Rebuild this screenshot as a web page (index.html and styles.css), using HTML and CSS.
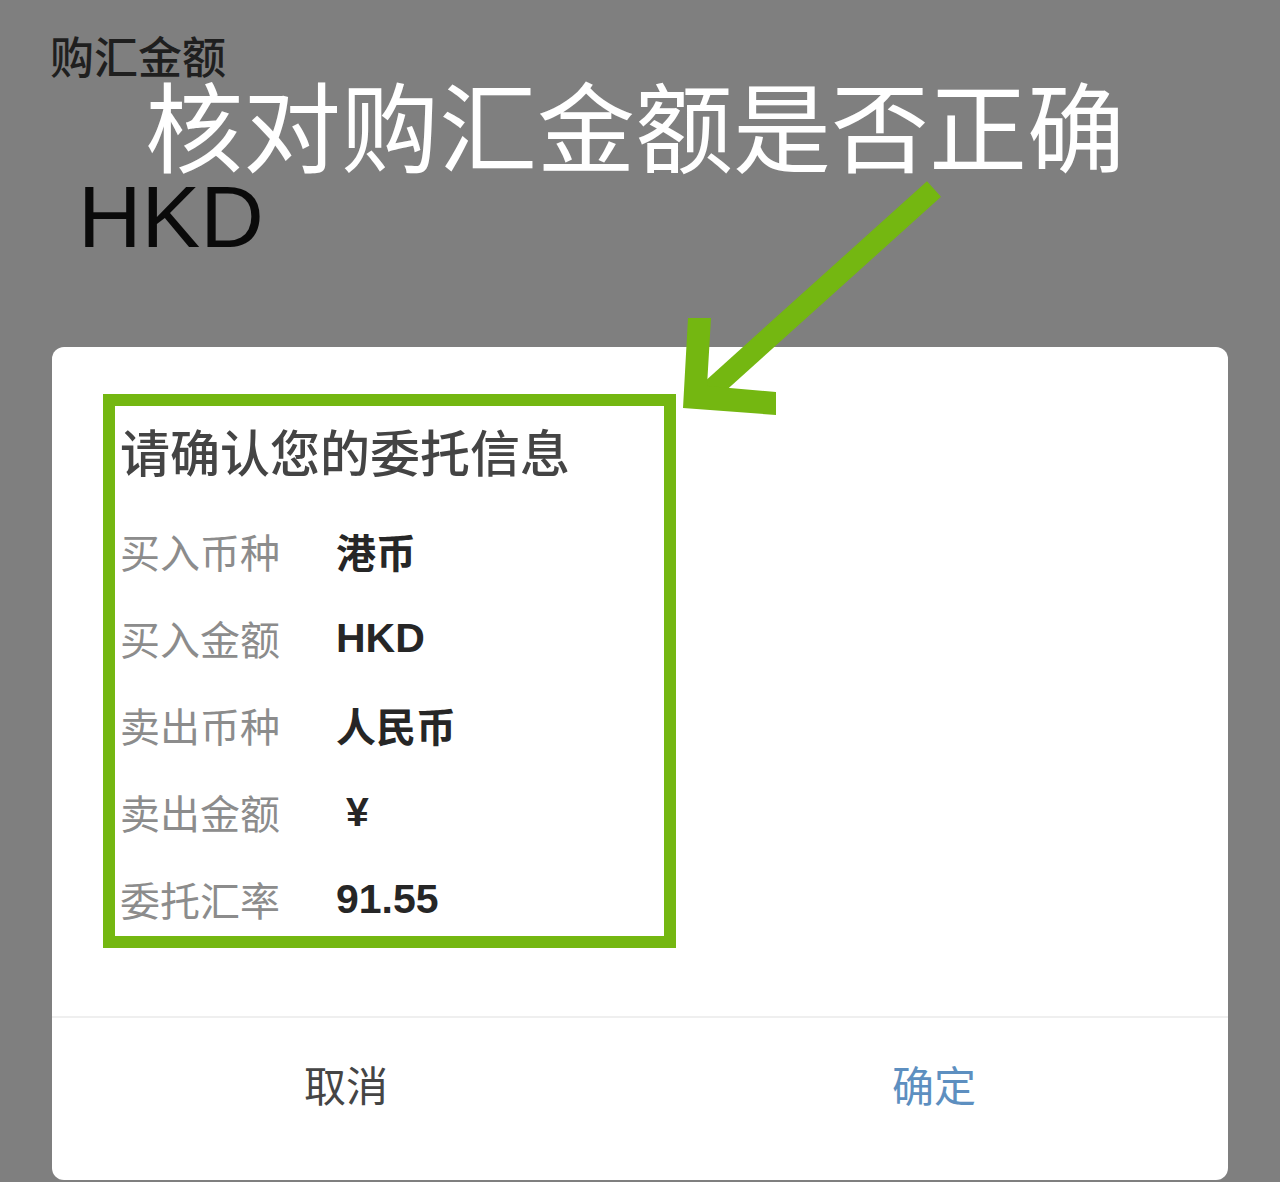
FILE: index.html
```html
<!DOCTYPE html>
<html lang="zh-CN">
<head>
<meta charset="utf-8">
<title>购汇金额确认</title>
<link rel="stylesheet" href="styles.css">
</head>
<body>
<div class="page">
  <div class="field-label">购汇金额</div>
  <div class="annot">核对购汇金额是否正确</div>
  <div class="amount">HKD</div>

  <div class="dialog">
    <div class="highlight">
      <div class="dlg-title">请确认您的委托信息</div>
      <div class="rows">
        <div class="lbl">买入币种</div><div class="val">港币</div>
        <div class="lbl">买入金额</div><div class="val latin">HKD</div>
        <div class="lbl">卖出币种</div><div class="val">人民币</div>
        <div class="lbl">卖出金额</div><div class="val latin yen">¥</div>
        <div class="lbl">委托汇率</div><div class="val latin">91.55</div>
      </div>
    </div>
    <div class="divider"></div>
    <div class="actions">
      <div class="btn cancel">取消</div>
      <div class="btn ok">确定</div>
    </div>
  </div>

  <svg class="arrow" width="1280" height="1182" viewBox="0 0 1280 1182" aria-hidden="true">
    <line x1="934" y1="189" x2="702" y2="398" stroke="#74b711" stroke-width="21"/>
    <polygon points="688,318 711,318 707,386 776,392 776,415 683,408" fill="#74b711"/>
  </svg>
</div>
</body>
</html>
```

FILE: styles.css
```css
html, body {
  margin: 0;
  padding: 0;
}

body {
  background: #7f7f7f;
  font-family: "Noto Sans CJK SC", "Noto Sans", sans-serif;
  width: 1280px;
  height: 1182px;
  overflow: hidden;
}

.page {
  position: relative;
  width: 1280px;
  height: 1182px;
}

.field-label {
  padding: 32px 0 0 50px;
  font-size: 44px;
  line-height: 46px;
  font-weight: 500;
  color: #1f1f1f;
}

.annot {
  padding-left: 145px;
  font-size: 98px;
  line-height: 88px;
  font-weight: 400;
  color: #ffffff;
  white-space: nowrap;
}

.amount {
  margin-top: 8px;
  padding-left: 78px;
  font-family: "Liberation Sans", Arial, sans-serif;
  font-size: 88px;
  line-height: 86px;
  color: #0a0a0a;
}

.dialog {
  margin: 87px 52px 0 52px;
  background: #ffffff;
  border-radius: 12px;
  height: 833px;
  box-sizing: border-box;
  padding-top: 47px;
  display: flex;
  flex-direction: column;
}

.highlight {
  margin-left: 51px;
  width: 573px;
  height: 554px;
  box-sizing: border-box;
  border: 12px solid #74b711;
  padding: 14px 0 0 5px;
}

.dlg-title {
  font-size: 50px;
  line-height: 60px;
  font-weight: 500;
  color: #444444;
  margin-bottom: 41px;
  white-space: nowrap;
}

.rows {
  display: grid;
  grid-template-columns: 216px 1fr;
  grid-auto-rows: 60px;
  row-gap: 27px;
  align-items: center;
}

.lbl {
  font-size: 40px;
  line-height: 60px;
  color: #8c8c8c;
  white-space: nowrap;
}

.val {
  font-size: 40px;
  line-height: 60px;
  font-weight: 700;
  color: #262626;
  white-space: nowrap;
}

.val.latin {
  font-family: "Liberation Sans", Arial, sans-serif;
  font-size: 41px;
}

.val.yen {
  padding-left: 10px;
}

.divider {
  margin-top: 68px;
  height: 2px;
  background: #efefef;
}

.actions {
  display: flex;
  height: 136px;
}

.btn {
  flex: 1;
  display: flex;
  align-items: center;
  justify-content: center;
  font-size: 42px;
  line-height: 1;
  padding-bottom: 4px;
}

.cancel {
  color: #454545;
}

.ok {
  color: #5d8fc0;
}

.arrow {
  position: absolute;
  left: 0;
  top: 0;
  pointer-events: none;
}
```
